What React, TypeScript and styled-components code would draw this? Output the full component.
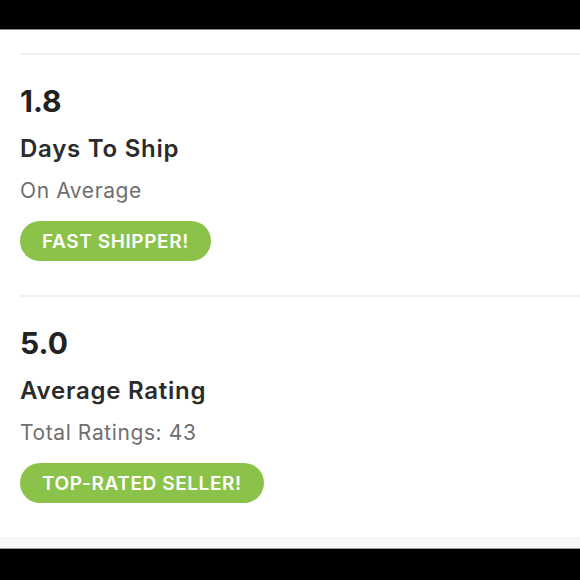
import React from "react";
import styled, { createGlobalStyle } from "styled-components";

const GlobalStyle = createGlobalStyle`
  html, body {
    margin: 0;
    padding: 0;
    background: #000;
  }
  body {
    font-family: Inter, "Liberation Sans", sans-serif;
    -webkit-font-smoothing: antialiased;
  }
`;

interface Stat {
  value: string;
  title: string;
  subtitle: string;
  badge: string;
}

const stats: Stat[] = [
  { value: "1.8", title: "Days To Ship", subtitle: "On Average", badge: "Fast Shipper!" },
  { value: "5.0", title: "Average Rating", subtitle: "Total Ratings: 43", badge: "Top-Rated Seller!" },
];

const Screen = styled.div`
  display: flex;
  flex-direction: column;
  min-height: 100vh;
  background: #000;
`;

const TopBar = styled.div`
  height: 30px;
  background: #000;
  border-bottom: 1px solid #8a8a8a;
  box-sizing: border-box;
`;

const Panel = styled.div`
  background: #fff;
  padding-top: 23px;
  padding-left: 20px;
`;

const StatBlock = styled.section`
  border-top: 2px solid #f0f0f0;
  padding: 28px 0 34px;
  display: flex;
  flex-direction: column;
  align-items: flex-start;
`;

const Value = styled.div`
  font-size: 30px;
  line-height: 36px;
  font-weight: 700;
  color: #222;
`;

const Title = styled.div`
  margin-top: 15px;
  font-size: 24px;
  line-height: 29px;
  font-weight: 600;
  letter-spacing: 0.75px;
  color: #2b2b2b;
`;

const Subtitle = styled.div`
  margin-top: 15px;
  font-size: 21px;
  line-height: 25px;
  letter-spacing: 0.6px;
  color: #6f6f6f;
`;

const Badge = styled.span`
  margin-top: 18px;
  height: 40px;
  padding: 0 22px;
  border-radius: 20px;
  background: #8bc34a;
  color: #fff;
  font-size: 19px;
  font-weight: 600;
  letter-spacing: 0.6px;
  text-transform: uppercase;
  display: inline-flex;
  align-items: center;
`;

const FooterBand = styled.div`
  height: 11px;
  background: #f6f6f6;
  border-bottom: 1px solid #9a9a9a;
`;

const BottomBar = styled.div`
  flex: 1;
  background: #000;
`;

export default function App() {
  return (
    <Screen>
      <GlobalStyle />
      <TopBar />
      <Panel>
        {stats.map((s) => (
          <StatBlock key={s.title}>
            <Value>{s.value}</Value>
            <Title>{s.title}</Title>
            <Subtitle>{s.subtitle}</Subtitle>
            <Badge>{s.badge}</Badge>
          </StatBlock>
        ))}
      </Panel>
      <FooterBand />
      <BottomBar />
    </Screen>
  );
}
